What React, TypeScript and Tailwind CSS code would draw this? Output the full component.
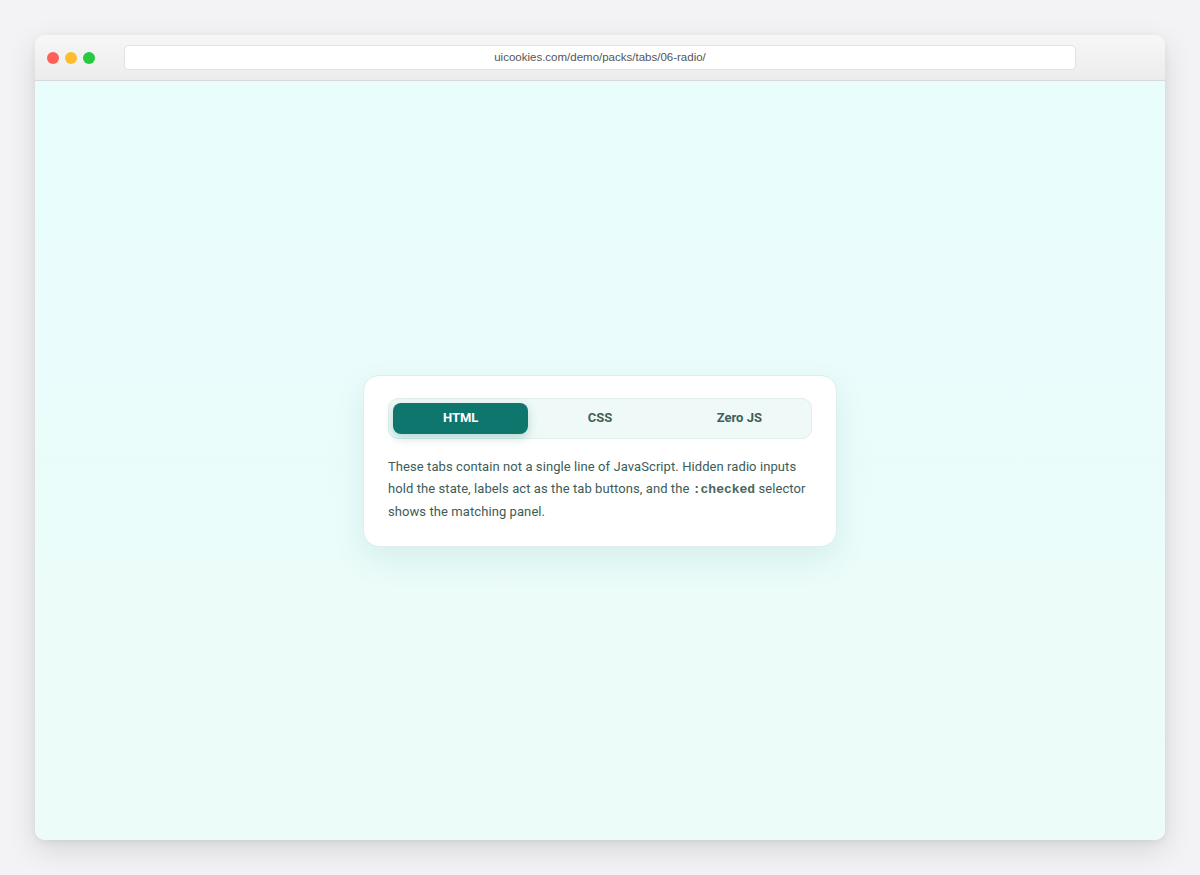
import React from "react";

export default function App() {
  return (
    <div className="w-[1200px] h-[875px] bg-[#f3f3f5] p-[35px] box-border" style={{ fontFamily: "Roboto, 'Noto Sans', sans-serif" }}>
      <div className="w-[1130px] h-[805px] rounded-[10px] overflow-hidden flex flex-col shadow-[0_10px_30px_rgba(0,0,0,0.12),0_2px_6px_rgba(0,0,0,0.06)] bg-white">
        <div className="h-[46px] shrink-0 flex items-center bg-gradient-to-b from-[#f7f7f7] to-[#ececec] border-b border-[#d8d8d8] px-[12px]">
          <div className="flex gap-[6px]">
            <span className="w-[12px] h-[12px] rounded-full bg-[#fe5f57]" />
            <span className="w-[12px] h-[12px] rounded-full bg-[#febc2e]" />
            <span className="w-[12px] h-[12px] rounded-full bg-[#28c840]" />
          </div>
          <div className="ml-[29px] w-[952px] h-[25px] rounded-[5px] bg-white border border-[#e2e2e2] flex items-center justify-center text-[11.5px] text-[#555]" style={{ fontFamily: "'Liberation Sans', Arial, sans-serif" }}>
            uicookies.com/demo/packs/tabs/06-radio/
          </div>
        </div>
        <div className="flex-1 bg-gradient-to-b from-[#e9fdfd] to-[#ecfcf8] flex items-center justify-center">
          <div className="w-[474px] rounded-[16px] bg-white border border-[#dcefec] shadow-[0_12px_32px_rgba(15,118,110,0.10)] px-[24px] pt-[22px] pb-[23px]">
            <div className="flex gap-[4px] h-[41px] rounded-[10px] bg-[#eff9f7] border border-[#dcefeb] p-[4px]">
              <div className="flex-1 rounded-[8px] bg-[#0f766e] text-white text-[13px] font-bold flex items-center justify-center shadow-[0_4px_10px_rgba(15,118,110,0.25)]">HTML</div>
              <div className="flex-1 text-[#3f5f5a] text-[13px] font-bold flex items-center justify-center">CSS</div>
              <div className="flex-1 text-[#3f5f5a] text-[13px] font-bold flex items-center justify-center">Zero JS</div>
            </div>
            <p className="mt-[17px] text-[13px] leading-[22px] tracking-[0.08px] text-[#3d5c57]">
              These tabs contain not a single line of JavaScript. Hidden radio inputs hold the state, labels act as the tab buttons, and the{" "}
              <code className="text-[13px] font-bold text-[#4a6662] tracking-normal" style={{ fontFamily: "'Liberation Mono', 'DejaVu Sans Mono', monospace" }}>:checked</code> selector shows the matching panel.
            </p>
          </div>
        </div>
      </div>
    </div>
  );
}
